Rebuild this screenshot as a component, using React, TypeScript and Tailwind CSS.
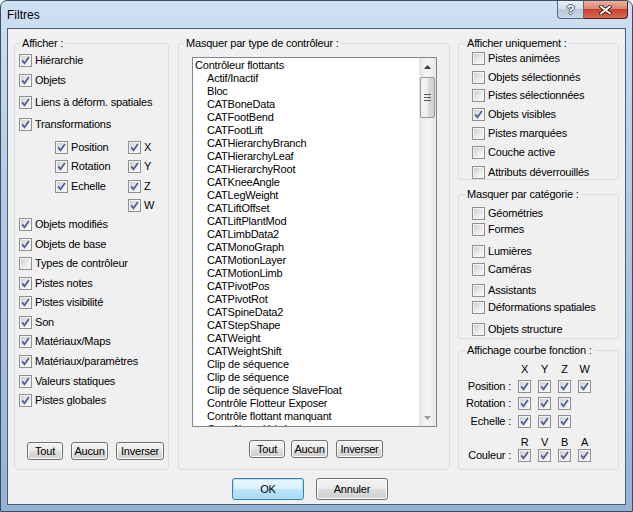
import React from 'react';

type Item = { label: string; on?: boolean; cls?: string };

const Check = ({ on = false }: { on?: boolean }) => (
  <span className="flex h-[13px] w-[13px] shrink-0 border border-[#8f8f8f] bg-[#f4f4f4] p-px">
    <span className="flex h-full w-full items-center justify-center bg-gradient-to-br from-[#cdcdcd] via-[#e8e8e8] to-[#fafafa]">
      {on && (
        <svg width="9" height="9" viewBox="0 0 9 9">
          <path d="M1.2 4.4 L3.5 7.3 L7.9 1" fill="none" stroke="#4b5c94" strokeWidth="1.7" />
        </svg>
      )}
    </span>
  </span>
);

const Row = ({ label, on, cls = '' }: Item) => (
  <div className={`flex h-[13px] items-center gap-[3px] ${cls}`}>
    <Check on={on} />
    <span className="whitespace-nowrap leading-[13px]">{label}</span>
  </div>
);

const Btn = ({ children, className = '' }: { children: React.ReactNode; className?: string }) => (
  <button
    className={`flex h-[18px] items-center justify-center rounded-[3px] border border-[#707070] bg-[linear-gradient(#f2f2f2,#ebebeb_50%,#dddddd_50%,#cfcfcf)] leading-[13px] shadow-[inset_0_0_0_1px_#fbfbfb] ${className}`}
  >
    {children}
  </button>
);

const Legend = ({ children, className = 'ml-[5px]' }: { children: React.ReactNode; className?: string }) => (
  <legend className={`px-[2px] leading-[13px] ${className}`}>{children}</legend>
);

const leftTop: Item[] = [
  { label: 'Hiérarchie', on: true },
  { label: 'Objets', on: true, cls: 'mt-[7px]' },
  { label: 'Liens à déform. spatiales', on: true, cls: 'mt-[9px]' },
  { label: 'Transformations', on: true, cls: 'mt-[9px]' },
];

const leftBottom: Item[] = [
  { label: 'Objets modifiés', on: true, cls: 'mt-[6px]' },
  { label: 'Objets de base', on: true, cls: 'mt-[7px]' },
  { label: 'Types de contrôleur', on: false, cls: 'mt-[6px]' },
  { label: 'Pistes notes', on: true, cls: 'mt-[7px]' },
  { label: 'Pistes visibilité', on: true, cls: 'mt-[6px]' },
  { label: 'Son', on: true, cls: 'mt-[7px]' },
  { label: 'Matériaux/Maps', on: true, cls: 'mt-[6px]' },
  { label: 'Matériaux/paramètres', on: true, cls: 'mt-[7px]' },
  { label: 'Valeurs statiques', on: true, cls: 'mt-[7px]' },
  { label: 'Pistes globales', on: true, cls: 'mt-[6px]' },
];

const controllers = [
  'Actif/Inactif',
  'Bloc',
  'CATBoneData',
  'CATFootBend',
  'CATFootLift',
  'CATHierarchyBranch',
  'CATHierarchyLeaf',
  'CATHierarchyRoot',
  'CATKneeAngle',
  'CATLegWeight',
  'CATLiftOffset',
  'CATLiftPlantMod',
  'CATLimbData2',
  'CATMonoGraph',
  'CATMotionLayer',
  'CATMotionLimb',
  'CATPivotPos',
  'CATPivotRot',
  'CATSpineData2',
  'CATStepShape',
  'CATWeight',
  'CATWeightShift',
  'Clip de séquence',
  'Clip de séquence',
  'Clip de séquence SlaveFloat',
  'Contrôle Flotteur Exposer',
  'Contrôle flottant manquant',
  'Contrôleur dérivé',
];

const onlyShow: Item[] = [
  { label: 'Pistes animées' },
  { label: 'Objets sélectionnés', cls: 'mt-[6px]' },
  { label: 'Pistes sélectionnées', cls: 'mt-[5px]' },
  { label: 'Objets visibles', on: true, cls: 'mt-[6px]' },
  { label: 'Pistes marquées', cls: 'mt-[6px]' },
  { label: 'Couche active', cls: 'mt-[6px]' },
  { label: 'Attributs déverrouillés', cls: 'mt-[7px]' },
];

const byCategory: Item[] = [
  { label: 'Géométries' },
  { label: 'Formes', cls: 'mt-[3px]' },
  { label: 'Lumières', cls: 'mt-[9px]' },
  { label: 'Caméras', cls: 'mt-[5px]' },
  { label: 'Assistants', cls: 'mt-[8px]' },
  { label: 'Déformations spatiales', cls: 'mt-[4px]' },
  { label: 'Objets structure', cls: 'mt-[9px]' },
];

const curveRows = [
  { label: 'Position :', n: 4, cls: 'mt-[4px]' },
  { label: 'Rotation :', n: 3, cls: 'mt-[4px]' },
  { label: 'Echelle :', n: 3, cls: 'mt-[5px]' },
];

const CurveHead = ({ letters, cls }: { letters: string[]; cls: string }) => (
  <div className={`grid h-[13px] grid-cols-[52px_13px_13px_13px_13px] gap-x-[7px] leading-[13px] ${cls}`}>
    <span />
    {letters.map((l) => (
      <span key={l} className="text-center">
        {l}
      </span>
    ))}
  </div>
);

const CurveRow = ({ label, n, cls }: { label: string; n: number; cls: string }) => (
  <div className={`grid h-[13px] grid-cols-[52px_13px_13px_13px_13px] items-center gap-x-[7px] ${cls}`}>
    <span className="whitespace-nowrap text-right leading-[13px]">{label}</span>
    {Array.from({ length: n }).map((_, i) => (
      <Check key={i} on />
    ))}
  </div>
);

export default function App() {
  return (
    <div className="flex h-[512px] w-[633px] flex-col overflow-hidden rounded-t-[7px] border border-[#3d4d5f] bg-[linear-gradient(#cfe0f2,#b7cfe8_30%,#a3bfdd_70%,#93b3d5)] font-['Liberation_Sans',Arial,sans-serif] text-[11px] tracking-[-0.2px] text-black">
      {/* title bar */}
      <div className="flex h-[27px] items-start justify-between">
        <span className="ml-[6px] mt-[7px] text-[12px] leading-[15px] tracking-normal text-black">Filtres</span>
        <div className="mr-[4px] flex">
          <div className="flex h-[18px] w-[27px] items-center justify-center rounded-bl-[4px] border border-t-0 border-[#58697c] bg-[linear-gradient(#e9f0f7,#d3dfeb_45%,#b7c8da_50%,#c9d7e5)]">
            <span className="text-[13px] font-bold leading-[13px] text-white [text-shadow:1px_0_#505a66,-1px_0_#505a66,0_1px_#505a66,0_-1px_#505a66]">
              ?
            </span>
          </div>
          <div className="flex h-[18px] w-[44px] items-center justify-center rounded-br-[4px] border border-l-0 border-t-0 border-[#5a1d11] bg-[linear-gradient(#eab2a5,#dd8471_45%,#c7432a_50%,#d66a4f)]">
            <svg width="13" height="10" viewBox="0 0 13 10">
              <path d="M2 1.5 L11 8.5 M11 1.5 L2 8.5" stroke="#3b1a14" strokeWidth="3.6" strokeLinecap="square" />
              <path d="M2 1.5 L11 8.5 M11 1.5 L2 8.5" stroke="#ffffff" strokeWidth="1.8" strokeLinecap="square" />
            </svg>
          </div>
        </div>
      </div>

      {/* client area */}
      <div className="mx-[6px] mb-[6px] flex flex-1 flex-col border border-[#4a5d73] bg-[#f0f0f0]">
        <div className="ml-[6px] mt-[8px] flex gap-[8px]">
          {/* Afficher */}
          <fieldset className="h-[433px] w-[155px] rounded-[3px] border border-[#d5dfe5]">
            <Legend>Afficher :</Legend>
            <div className="flex flex-col pl-[4px] pt-[4px]">
              {leftTop.map((it) => (
                <Row key={it.label} {...it} />
              ))}
              <div className="ml-[36px] mt-[10px] flex flex-col">
                <div className="flex">
                  <div className="w-[73px]">
                    <Row label="Position" on />
                  </div>
                  <Row label="X" on />
                </div>
                <div className="mt-[6px] flex">
                  <div className="w-[73px]">
                    <Row label="Rotation" on />
                  </div>
                  <Row label="Y" on />
                </div>
                <div className="mt-[7px] flex">
                  <div className="w-[73px]">
                    <Row label="Echelle" on />
                  </div>
                  <Row label="Z" on />
                </div>
                <div className="mt-[6px] flex">
                  <div className="w-[73px]" />
                  <Row label="W" on />
                </div>
              </div>
              {leftBottom.map((it) => (
                <Row key={it.label} {...it} />
              ))}
              <div className="ml-[8px] mt-[35px] flex gap-[8px]">
                <Btn className="w-[36px]">Tout</Btn>
                <Btn className="w-[37px]">Aucun</Btn>
                <Btn className="w-[48px]">Inverser</Btn>
              </div>
            </div>
          </fieldset>

          {/* Masquer par type de contrôleur */}
          <fieldset className="ml-px h-[433px] w-[272px] rounded-[3px] border border-[#d5dfe5]">
            <Legend>Masquer par type de contrôleur :</Legend>
            <div className="flex flex-col pl-[13px] pt-[7px]">
              <div className="flex h-[370px] w-[245px] border border-[#828790] bg-white">
                <div className="h-full flex-1 overflow-hidden pt-px leading-[13px]">
                  <div className="pl-[2px]">Contrôleur flottants</div>
                  {controllers.map((c, i) => (
                    <div key={i} className="whitespace-nowrap pl-[14px]">
                      {c}
                    </div>
                  ))}
                </div>
                <div className="flex w-[17px] flex-col bg-[linear-gradient(90deg,#e3e3e3,#f3f3f3_40%,#f3f3f3_60%,#e6e6e6)]">
                  <div className="flex h-[17px] items-center justify-center">
                    <svg width="7" height="4" viewBox="0 0 7 4">
                      <path d="M0 4 L3.5 0 L7 4 Z" fill="#3a3a3a" />
                    </svg>
                  </div>
                  <div className="mx-px mt-[2px] flex h-[41px] flex-col items-center justify-center gap-[2px] rounded-[2px] border border-[#979797] bg-[linear-gradient(90deg,#f6f6f6,#ececec_50%,#dcdcdc_51%,#cfcfcf)]">
                    <span className="h-px w-[7px] bg-[#5a5a5a]" />
                    <span className="h-px w-[7px] bg-[#5a5a5a]" />
                    <span className="h-px w-[7px] bg-[#5a5a5a]" />
                  </div>
                  <div className="flex-1" />
                  <div className="flex h-[17px] items-center justify-center">
                    <svg width="7" height="4" viewBox="0 0 7 4">
                      <path d="M0 0 L3.5 4 L7 0 Z" fill="#9a9a9a" />
                    </svg>
                  </div>
                </div>
              </div>
              <div className="ml-[57px] mt-[13px] flex">
                <Btn className="w-[36px]">Tout</Btn>
                <Btn className="ml-[6px] w-[37px]">Aucun</Btn>
                <Btn className="ml-[8px] w-[47px]">Inverser</Btn>
              </div>
            </div>
          </fieldset>

          {/* right column */}
          <div className="flex w-[161px] flex-col">
            <fieldset className="h-[143px] rounded-[3px] border border-[#d5dfe5]">
              <Legend className="ml-[6px]">Afficher uniquement :</Legend>
              <div className="flex flex-col pl-[13px] pt-[2px]">
                {onlyShow.map((it) => (
                  <Row key={it.label} {...it} />
                ))}
              </div>
            </fieldset>
            <fieldset className="mt-[8px] h-[151px] rounded-[3px] border border-[#d5dfe5]">
              <Legend className="ml-[6px]">Masquer par catégorie :</Legend>
              <div className="flex flex-col pl-[13px] pt-[6px]">
                {byCategory.map((it) => (
                  <Row key={it.label} {...it} />
                ))}
              </div>
            </fieldset>
            <fieldset className="mt-[5px] h-[126px] rounded-[3px] border border-[#d5dfe5]">
              <Legend className="ml-[6px]">Affichage courbe fonction :</Legend>
              <div className="flex flex-col pt-[6px]">
                <CurveHead letters={['X', 'Y', 'Z', 'W']} cls="" />
                {curveRows.map((r) => (
                  <CurveRow key={r.label} {...r} />
                ))}
                <CurveHead letters={['R', 'V', 'B', 'A']} cls="mt-[8px]" />
                <CurveRow label="Couleur :" n={4} cls="" />
              </div>
            </fieldset>
          </div>
        </div>

        {/* dialog buttons */}
        <div className="ml-[224px] mt-[8px] flex gap-[12px]">
          <button className="flex h-[22px] w-[72px] items-center justify-center rounded-[3px] border border-[#3c7fb1] bg-[linear-gradient(#eaf6fd,#d9f0fc_50%,#bee6fd_50%,#a7d9f5)] shadow-[inset_0_0_0_1px_#a9e4fc] leading-[13px]">
            OK
          </button>
          <button className="flex h-[22px] w-[72px] items-center justify-center rounded-[3px] border border-[#707070] bg-[linear-gradient(#f2f2f2,#ebebeb_50%,#dddddd_50%,#cfcfcf)] shadow-[inset_0_0_0_1px_#fbfbfb] leading-[13px]">
            Annuler
          </button>
        </div>
      </div>
    </div>
  );
}
